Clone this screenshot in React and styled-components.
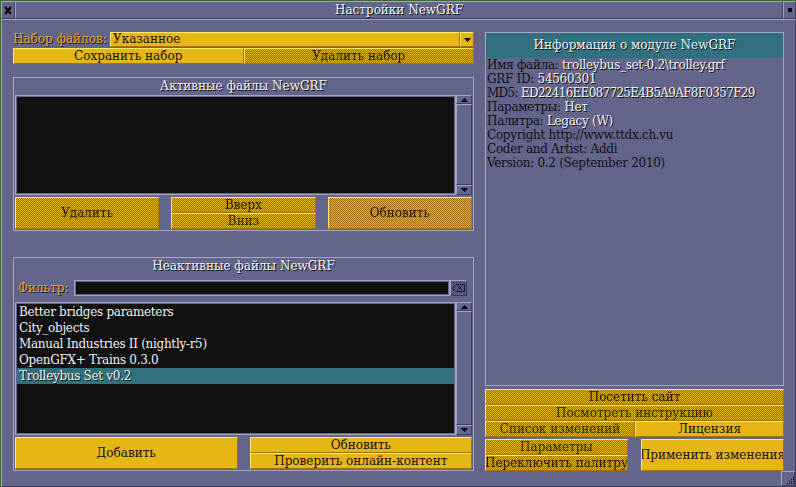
import React from "react";
import styled, { createGlobalStyle, css } from "styled-components";

const G = "#64658a";
const GL = "#a4a5c3";
const GD = "#3e3f5e";
const Y = "#e6b614";
const YL = "#fcec6c";
const YD = "#a87008";
const YC = "#9c6c0c";
const TEAL = "#33707f";
const INK = "#111111";
const WHITE = "#f2f2f2";

const Global = createGlobalStyle`
  html, body { margin: 0; padding: 0; background: #3b6a2c; overflow: hidden; }
  #root { width: 796px; height: 487px; }
`;

const raised = css`
  box-sizing: border-box;
  border-style: solid;
  border-width: 1px;
  border-color: ${GL} ${GD} ${GD} ${GL};
  background: ${G};
`;

const lit = css`
  color: ${WHITE};
  text-shadow: 1px 1px 0 #101010;
`;

const Win = styled.div`
  width: 795px;
  height: 486px;
  margin: 1px 0 0 1px;
  display: flex;
  flex-direction: column;
  background: ${G};
  font: 12px "DejaVu Serif", serif;
  color: ${INK};
`;

const TitleBar = styled.div`
  display: flex;
  height: 18px;
`;

const CloseBox = styled.div`
  ${raised};
  width: 14px;
  display: flex;
  align-items: center;
  justify-content: center;
`;

const Caption = styled.div`
  ${raised};
  ${lit};
  flex: 1;
  display: flex;
  align-items: center;
  justify-content: center;
`;

const StickyBox = styled.div`
  ${raised};
  width: 13px;
  display: flex;
  align-items: center;
  justify-content: center;
  &::after {
    content: "";
    width: 4px;
    height: 4px;
    background: #000;
  }
`;

const Body = styled.div`
  ${raised};
  flex: 1;
  display: flex;
  flex-direction: column;
  padding: 12px 11px 0 11px;
`;

const Main = styled.div`
  display: grid;
  grid-template-columns: 461px 299px;
  column-gap: 11px;
  height: 439px;
`;

const Col = styled.div`
  display: flex;
  flex-direction: column;
  min-width: 0;
`;

const SetRow = styled.div`
  display: flex;
  height: 15px;
`;

const OrangeLabel = styled.div`
  width: ${p => p.$w}px;
  flex-shrink: 0;
  color: #f4a82a;
  text-shadow: 1px 1px 0 #101010;
  line-height: ${p => p.$lh || 15}px;
  white-space: nowrap;
`;

const DropText = styled.div`
  flex: 1;
  box-sizing: border-box;
  border-style: solid;
  border-width: 1px;
  border-color: ${YL} ${YD} ${YD} ${YL};
  background: ${Y};
  padding-left: 2px;
  line-height: 13px;
`;

const ArrowBtn = styled.div`
  width: 14px;
  box-sizing: border-box;
  border-style: solid;
  border-width: 1px;
  border-color: ${YL} ${YD} ${YD} ${YL};
  background: ${Y};
  display: flex;
  align-items: center;
  justify-content: center;
`;

const Btn = styled.div`
  box-sizing: border-box;
  height: ${p => p.$h || 16}px;
  border-style: solid;
  border-width: 1px;
  border-color: ${YL} ${YD} ${YD} ${YL};
  background: ${p =>
    p.$off
      ? `repeating-conic-gradient(${YC} 0 25%, ${Y} 0 50%) 0 0 / 2px 2px`
      : Y};
  display: flex;
  align-items: center;
  justify-content: center;
  overflow: hidden;
  white-space: nowrap;
  min-width: 0;
`;

const Dim = styled.span`
  color: transparent;
  background: repeating-conic-gradient(#000 0 25%, rgba(0, 0, 0, 0.65) 0 50%) 0 0 / 2px 2px;
  -webkit-background-clip: text;
  background-clip: text;
`;

const Pair = styled.div`
  display: grid;
  grid-template-columns: ${p => p.$cols || "1fr 1fr"};
  justify-content: space-between;
  column-gap: ${p => p.$gap || 0}px;
  margin-top: ${p => p.$mt || 0}px;
`;

const Stack = styled.div`
  display: flex;
  flex-direction: column;
  min-width: 0;
`;

const Frame = styled.div`
  box-sizing: border-box;
  height: ${p => p.$h}px;
  margin-top: ${p => p.$mt}px;
  border: 1px solid ${GL};
  padding: 0 1px 1px;
  display: flex;
  flex-direction: column;
`;

const FrameTitle = styled.div`
  ${lit};
  height: 17px;
  line-height: 17px;
  text-align: center;
  flex-shrink: 0;
`;

const ListArea = styled.div`
  display: flex;
  height: ${p => p.$h}px;
  margin-top: ${p => p.$mt || 0}px;
  margin-bottom: 2px;
  flex-shrink: 0;
`;

const ListBox = styled.div`
  flex: 1;
  box-sizing: border-box;
  border: 1px solid ${GL};
  background: ${INK};
  box-shadow: inset 0 0 0 1px ${G};
  padding: 1px;
  overflow: hidden;
`;

const Item = styled.div`
  ${lit};
  height: 16px;
  line-height: 16px;
  padding-left: 2px;
  letter-spacing: -0.3px;
  white-space: nowrap;
  background: ${p => (p.$sel ? TEAL : "transparent")};
`;

const Scroll = styled.div`
  width: 16px;
  display: flex;
  flex-direction: column;
`;

const ScrollBtn = styled.div`
  ${raised};
  height: ${p => p.$h}px;
  display: flex;
  align-items: center;
  justify-content: center;
`;

const ScrollTrack = styled.div`
  ${raised};
  flex: 1;
`;

const FilterRow = styled.div`
  display: flex;
  height: 16px;
  margin-top: 5px;
  padding-left: 3px;
  padding-right: 5px;
`;

const EditBox = styled.div`
  flex: 1;
  box-sizing: border-box;
  border: 1px solid ${GL};
  background: ${INK};
  box-shadow: inset 0 0 0 1px ${G};
`;

const ClearBtn = styled.div`
  width: 17px;
  box-sizing: border-box;
  border-style: solid;
  border-width: 1px;
  border-color: ${GL} ${GD} ${GD} ${GL};
  background: repeating-conic-gradient(#44456a 0 25%, ${G} 0 50%) 0 0 / 2px 2px;
  display: flex;
  align-items: center;
  justify-content: center;
`;

const Info = styled.div`
  flex: 1;
  box-sizing: border-box;
  border: 1px solid ${GL};
  display: flex;
  flex-direction: column;
  margin-bottom: 3px;
`;

const InfoHead = styled.div`
  ${lit};
  height: 25px;
  line-height: 25px;
  background: ${TEAL};
  text-align: center;
`;

const InfoLine = styled.div`
  height: 14px;
  line-height: 14px;
  padding-left: 1px;
  letter-spacing: ${p => p.$tight ? -0.7 : -0.3}px;
  white-space: nowrap;
`;

const Val = styled.span`
  ${lit};
`;

const Foot = styled.div`
  flex: 1;
  display: flex;
  justify-content: flex-end;
  align-items: flex-end;
  margin-right: -11px;
`;

const ResizeBox = styled.div`
  ${raised};
  width: 14px;
  height: 15px;
  display: flex;
  align-items: flex-end;
  justify-content: flex-end;
`;

const Tri = ({ up }) => (
  <svg width="7" height="4" viewBox="0 0 7 4">
    <path d={up ? "M3.5 0 L7 4 L0 4 Z" : "M0 0 L7 0 L3.5 4 Z"} fill="#000" />
  </svg>
);

const ScrollBar = () => (
  <Scroll>
    <ScrollBtn $h={9}>
      <Tri up />
    </ScrollBtn>
    <ScrollTrack />
    <ScrollBtn $h={10}>
      <Tri />
    </ScrollBtn>
  </Scroll>
);

const B = ({ off, h, children }) => (
  <Btn $off={off} $h={h}>
    {off ? <Dim>{children}</Dim> : children}
  </Btn>
);

const inactive = [
  "Better bridges parameters",
  "City_objects",
  "Manual Industries II (nightly-r5)",
  "OpenGFX+ Trains 0.3.0",
  "Trolleybus Set v0.2",
];

export default function App() {
  return (
    <>
      <Global />
      <Win>
        <TitleBar>
          <CloseBox>
            <svg width="8" height="9" viewBox="0 0 8 9">
              <path d="M1 1 L7 8 M7 1 L1 8" stroke="#000" strokeWidth="2" />
            </svg>
          </CloseBox>
          <Caption>Настройки NewGRF</Caption>
          <StickyBox />
        </TitleBar>
        <Body>
          <Main>
            <Col>
              <SetRow>
                <OrangeLabel $w={97}>Набор файлов:</OrangeLabel>
                <DropText>Указанное</DropText>
                <ArrowBtn>
                  <Tri />
                </ArrowBtn>
              </SetRow>
              <Pair $mt={1}>
                <B>Сохранить набор</B>
                <B off>Удалить набор</B>
              </Pair>

              <Frame $h={154} $mt={13}>
                <FrameTitle>Активные файлы NewGRF</FrameTitle>
                <ListArea $h={100}>
                  <ListBox />
                  <ScrollBar />
                </ListArea>
                <Pair $cols="1fr 1fr 1fr" $gap={12}>
                  <B off h={32}>Удалить</B>
                  <Stack>
                    <B off>Вверх</B>
                    <B off>Вниз</B>
                  </Stack>
                  <B off h={32}>Обновить</B>
                </Pair>
              </Frame>

              <Frame $h={214} $mt={26}>
                <FrameTitle>Неактивные файлы NewGRF</FrameTitle>
                <FilterRow>
                  <OrangeLabel $w={56} $lh={16}>Фильтр:</OrangeLabel>
                  <EditBox />
                  <ClearBtn>
                    <svg width="13" height="8" viewBox="0 0 13 8">
                      <path
                        d="M0.5 4 L4 0.5 H12.5 V7.5 H4 Z M5.5 2 L10 6 M10 2 L5.5 6"
                        fill="none"
                        stroke="#1a1a2a"
                        strokeWidth="1"
                      />
                    </svg>
                  </ClearBtn>
                </FilterRow>
                <ListArea $h={133} $mt={6}>
                  <ListBox>
                    {inactive.map((name, i) => (
                      <Item key={name} $sel={i === 4}>
                        {name}
                      </Item>
                    ))}
                  </ListBox>
                  <ScrollBar />
                </ListArea>
                <Pair $gap={12}>
                  <B h={32}>Добавить</B>
                  <Stack>
                    <B>Обновить</B>
                    <B>Проверить онлайн-контент</B>
                  </Stack>
                </Pair>
              </Frame>
            </Col>

            <Col>
              <Info>
                <InfoHead>Информация о модуле NewGRF</InfoHead>
                <InfoLine>
                  Имя файла: <Val>trolleybus_set-0.2\trolley.grf</Val>
                </InfoLine>
                <InfoLine>
                  GRF ID: <Val>54560301</Val>
                </InfoLine>
                <InfoLine $tight>
                  MD5: <Val>ED22416EE087725E4B5A9AF8F0357F29</Val>
                </InfoLine>
                <InfoLine>
                  Параметры: <Val>Нет</Val>
                </InfoLine>
                <InfoLine>
                  Палитра: <Val>Legacy (W)</Val>
                </InfoLine>
                <InfoLine>Copyright http://www.ttdx.ch.vu</InfoLine>
                <InfoLine>Coder and Artist: Addi</InfoLine>
                <InfoLine>Version: 0.2 (September 2010)</InfoLine>
              </Info>
              <B off>Посетить сайт</B>
              <B off>Посмотреть инструкцию</B>
              <Pair $cols="150px 149px">
                <B off>Список изменений</B>
                <B>Лицензия</B>
              </Pair>
              <Pair $cols="143px 143px" $mt={2}>
                <Stack>
                  <B off>Параметры</B>
                  <B off>Переключить палитру</B>
                </Stack>
                <B h={32}>Применить изменения</B>
              </Pair>
            </Col>
          </Main>
          <Foot>
            <ResizeBox>
              <svg width="9" height="9" viewBox="0 0 9 9">
                <path
                  d="M8 1h1v1H8zM6 3h1v1H6zM8 3h1v1H8zM4 5h1v1H4zM6 5h1v1H6zM8 5h1v1H8zM2 7h1v1H2zM4 7h1v1H4zM6 7h1v1H6zM8 7h1v1H8z"
                  fill="#000"
                />
              </svg>
            </ResizeBox>
          </Foot>
        </Body>
      </Win>
    </>
  );
}
